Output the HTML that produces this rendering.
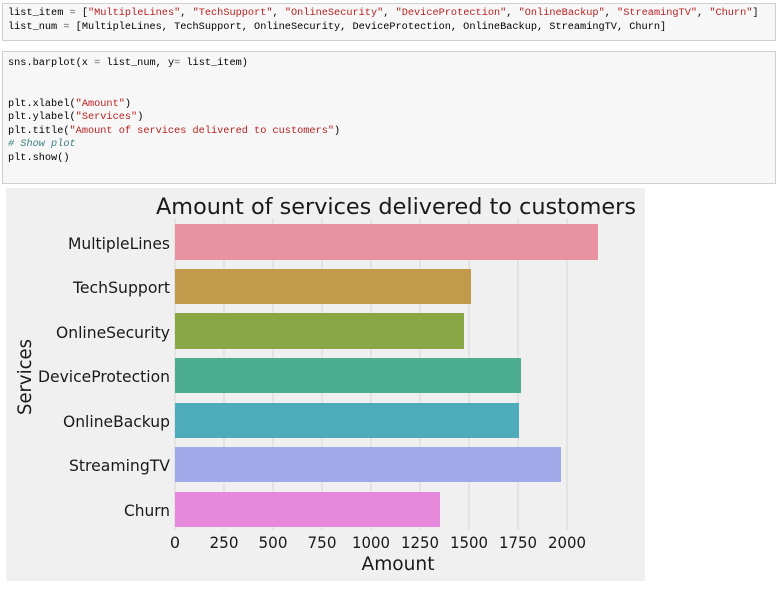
<!DOCTYPE html>
<html><head><meta charset="utf-8"><style>
body{margin:0;width:776px;height:598px;background:#fff;position:relative;overflow:hidden;font-family:"Liberation Sans",sans-serif}
.cell{position:absolute;left:2px;width:774px;background:#f7f7f7;border:1px solid #cfcfcf;box-sizing:border-box}
pre{margin:0;position:absolute;left:5px;font-family:"Liberation Mono",monospace;font-size:10.25px;line-height:13.5px;color:#000}
.s{color:#ba2121}.o{color:#666}.c{color:#408080;font-style:italic}
</style></head><body>
<div class="cell" style="top:3px;height:38px"><pre style="top:3px">list_item <span class="o">=</span> [<span class="s">"MultipleLines"</span>, <span class="s">"TechSupport"</span>, <span class="s">"OnlineSecurity"</span>, <span class="s">"DeviceProtection"</span>, <span class="s">"OnlineBackup"</span>, <span class="s">"StreamingTV"</span>, <span class="s">"Churn"</span>]
list_num <span class="o">=</span> [MultipleLines, TechSupport, OnlineSecurity, DeviceProtection, OnlineBackup, StreamingTV, Churn]</pre></div>
<div class="cell" style="top:51px;height:133px"><pre style="top:5px">sns.barplot(x <span class="o">=</span> list_num, y<span class="o">=</span> list_item)


plt.xlabel(<span class="s">"Amount"</span>)
plt.ylabel(<span class="s">"Services"</span>)
plt.title(<span class="s">"Amount of services delivered to customers"</span>)
<span class="c"># Show plot</span>
plt.show()</pre></div>
<svg style="position:absolute;left:0;top:0" width="776" height="598">
<rect x="6" y="188" width="639" height="393" fill="#f0f0f0"/>
<g stroke="#d6d6d6" stroke-width="1">
<line x1="175" y1="218" x2="175" y2="530"/><line x1="224" y1="218" x2="224" y2="530"/><line x1="273" y1="218" x2="273" y2="530"/><line x1="322" y1="218" x2="322" y2="530"/><line x1="371" y1="218" x2="371" y2="530"/><line x1="420" y1="218" x2="420" y2="530"/><line x1="469" y1="218" x2="469" y2="530"/><line x1="518" y1="218" x2="518" y2="530"/><line x1="567" y1="218" x2="567" y2="530"/>
</g>
<rect x="175" y="224" width="423" height="36" fill="#e8939f"/>
<rect x="175" y="269" width="296" height="35" fill="#c39a4b"/>
<rect x="175" y="313" width="289" height="36" fill="#89a845"/>
<rect x="175" y="358" width="346" height="35" fill="#4cae8e"/>
<rect x="175" y="403" width="344" height="35" fill="#4eabb9"/>
<rect x="175" y="447" width="386" height="35" fill="#a0aae8"/>
<rect x="175" y="492" width="265" height="35" fill="#e689dd"/>
<g font-family="DejaVu Sans,sans-serif" font-size="16" fill="#1a1a1a" text-anchor="end">
<text x="170" y="249" textLength="102" lengthAdjust="spacingAndGlyphs">MultipleLines</text><text x="170" y="293" textLength="97" lengthAdjust="spacingAndGlyphs">TechSupport</text><text x="170" y="338" textLength="114" lengthAdjust="spacingAndGlyphs">OnlineSecurity</text><text x="170" y="382" textLength="132" lengthAdjust="spacingAndGlyphs">DeviceProtection</text><text x="170" y="427" textLength="107" lengthAdjust="spacingAndGlyphs">OnlineBackup</text><text x="170" y="471" textLength="101" lengthAdjust="spacingAndGlyphs">StreamingTV</text><text x="170" y="516" textLength="46" lengthAdjust="spacingAndGlyphs">Churn</text>
</g>
<g font-family="DejaVu Sans,sans-serif" font-size="16" fill="#1a1a1a" text-anchor="middle">
<text x="175" y="548">0</text><text x="224" y="548" textLength="29" lengthAdjust="spacingAndGlyphs">250</text><text x="273" y="548" textLength="29" lengthAdjust="spacingAndGlyphs">500</text><text x="322" y="548" textLength="29" lengthAdjust="spacingAndGlyphs">750</text><text x="371" y="548" textLength="38" lengthAdjust="spacingAndGlyphs">1000</text><text x="420" y="548" textLength="38" lengthAdjust="spacingAndGlyphs">1250</text><text x="469" y="548" textLength="38" lengthAdjust="spacingAndGlyphs">1500</text><text x="518" y="548" textLength="38" lengthAdjust="spacingAndGlyphs">1750</text><text x="567" y="548" textLength="38" lengthAdjust="spacingAndGlyphs">2000</text>
<text x="398" y="570" font-size="19" textLength="73" lengthAdjust="spacingAndGlyphs">Amount</text>
<text x="396" y="214" font-size="22" textLength="480" lengthAdjust="spacingAndGlyphs">Amount of services delivered to customers</text>
<text transform="translate(31,377) rotate(-90)" font-size="19" textLength="76" lengthAdjust="spacingAndGlyphs">Services</text>
</g>
</svg>
</body></html>
